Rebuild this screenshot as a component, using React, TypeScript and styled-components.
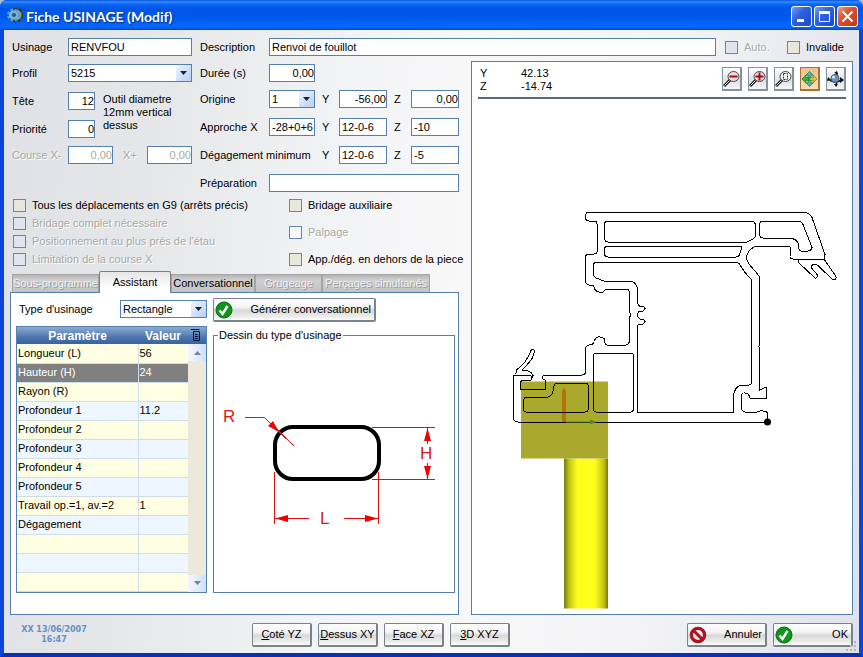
import React, { useState } from "react";
import styled, { createGlobalStyle, css } from "styled-components";

const GlobalStyle = createGlobalStyle`
  * { box-sizing: border-box; }
  body { margin: 0; background: #aeb9d6; }
  body, button, input, select {
    font-family: "Liberation Sans", Arial, sans-serif;
    font-size: 11px;
    line-height: 13px;
    color: #000;
  }
`;

const LINE = "#5480b0";

/* ---------- window frame ---------- */

const Window = styled.div`
  min-height: 100vh;
  display: flex;
  flex-direction: column;
  border: 4px solid #0a45dc;
  border-top: 0;
  border-bottom-color: #0831b8;
  border-radius: 7px 7px 0 0;
  background: #0a45dc;
`;

const TitleBar = styled.header`
  height: 30px;
  margin: 0 -4px;
  padding: 0 5px 0 7px;
  display: flex;
  align-items: center;
  gap: 3px;
  border-radius: 7px 7px 0 0;
  background: linear-gradient(#0a50d8 0, #2f8cff 6%, #0a66f2 14%, #0055e6 30%, #0058ea 55%, #0468ff 85%, #0562f5 93%, #0046c8 100%);
`;

const Title = styled.h1`
  flex: 1;
  margin: 0;
  padding-top: 4px;
  font: bold 14px/18px Lato, "Open Sans", sans-serif;
  color: #fff;
  text-shadow: 1px 1px 1px #0a2a80;
  white-space: nowrap;
`;

const CaptionButton = styled.button<{ $close?: boolean }>`
  width: 21px;
  height: 21px;
  margin: 3px 0 0;
  padding: 0;
  display: grid;
  place-items: center;
  margin-right: ${(p) => (p.$close ? 0 : -1)}px;
  border: 1px solid #fff;
  border-radius: 3px;
  background: ${(p) =>
    p.$close
      ? "linear-gradient(135deg, #f0a088, #e0512c 40%, #c8360f)"
      : "linear-gradient(135deg, #7c9df0, #2f62e0 40%, #1c49c8)"};
`;

const Body = styled.main`
  flex: 1;
  display: flex;
  flex-direction: column;
  padding: 8px 6px 0;
  background: linear-gradient(95deg, #dfe1e5 0%, #e6e7e9 18%, #f2f3f5 38%, #f8f8f9 52%, #f4f4f6 74%, #dfe2ea 100%);
`;

/* ---------- form parts ---------- */

const Label = styled.label<{ $off?: boolean; $inner?: boolean; $span?: number }>`
  line-height: 18px;
  white-space: nowrap;
  padding-left: ${(p) => (p.$inner ? 7 : 0)}px;
  ${(p) => p.$span && css`grid-column: span ${p.$span};`}
  ${(p) => p.$off && css`color: #a9a9a4; text-shadow: 1px 1px 0 #fff;`}
`;

const Field = styled.input<{ $right?: boolean; $span?: number }>`
  width: 100%;
  min-width: 0;
  height: 18px;
  padding: 0 0 0 2px;
  border: 1px solid ${LINE};
  border-radius: 0;
  outline: none;
  background: #fff;
  text-align: ${(p) => (p.$right ? "right" : "left")};
  ${(p) => p.$span && css`grid-column: span ${p.$span};`}
  &:disabled { color: #a9a9a4; }
`;

const SelectBox = styled.span<{ $span?: number }>`
  position: relative;
  display: block;
  height: 18px;
  ${(p) => p.$span && css`grid-column: span ${p.$span};`}
`;

const NativeSelect = styled.select`
  appearance: none;
  width: 100%;
  height: 18px;
  padding: 0 18px 0 2px;
  border: 1px solid ${LINE};
  border-radius: 0;
  outline: none;
  background: #fff;
`;

const SelectArrow = styled.span`
  position: absolute;
  top: 1px;
  right: 1px;
  bottom: 1px;
  width: 15px;
  display: grid;
  place-items: center;
  pointer-events: none;
  background: linear-gradient(135deg, #eef4fd, #b9cef2);
`;

function Select({ id, options, span }: { id: string; options: string[]; span?: number }) {
  return (
    <SelectBox $span={span}>
      <NativeSelect id={id}>
        {options.map((o) => <option key={o}>{o}</option>)}
      </NativeSelect>
      <SelectArrow>
        <svg width="7" height="4"><path d="M0 0h7L3.5 4z" fill="#16233f" /></svg>
      </SelectArrow>
    </SelectBox>
  );
}

const CheckLabel = styled.label<{ $off?: boolean }>`
  height: 18px;
  display: flex;
  align-items: center;
  gap: 6px;
  white-space: nowrap;
  ${(p) => p.$off && css`color: #a9a9a4; text-shadow: 1px 1px 0 #fff;`}
`;

const Box = styled.input<{ $tone: string }>`
  appearance: none;
  width: 13px;
  height: 13px;
  margin: 0;
  border: 1px solid #6288b8;
  background: ${(p) => p.$tone};
  &:checked { box-shadow: inset 0 0 0 3px #fff; background: #21a121; }
`;

function Check({ children, off, tone }: { children: string; off?: boolean; tone?: string }) {
  return (
    <CheckLabel $off={off}>
      <Box type="checkbox" disabled={off} $tone={tone ?? (off ? "#dfe5ee" : "#e9e7dc")} />
      {children}
    </CheckLabel>
  );
}

/* ---------- layout ---------- */

const TopRow = styled.div`
  display: grid;
  grid-template-columns: 56px 124px 77px 1fr 62px 66px;
  padding-left: 2px;
  margin-bottom: 5px;
`;

const DescriptionLabel = styled(Label)`
  padding-left: 8px;
`;

const DescriptionCell = styled.div`
  padding-right: 9px;
`;

const Columns = styled.div`
  flex: 1;
  display: grid;
  grid-template-columns: 449px minmax(0, 1fr);
  gap: 12px;
`;

const LeftColumn = styled.div`
  display: flex;
  flex-direction: column;
  padding-top: 3px;
`;

const Forms = styled.div`
  display: grid;
  grid-template-columns: 180px 259px;
  gap: 8px;
  padding-left: 2px;
`;

const ToolForm = styled.div`
  display: grid;
  grid-template-columns: 56px 27px 18px 34px 45px;
  grid-template-rows: 28px 28px 26px 18px;
  align-items: start;
`;

const ToolNote = styled.p`
  grid-column: 3 / -1;
  grid-row: 2 / span 2;
  margin: 0;
  padding: 1px 20px 0 8px;
`;

const OffsetForm = styled.div`
  display: grid;
  grid-template-columns: 69px 46px 24px 48px 24px 48px;
  grid-template-rows: 26px 28px 28px 28px 18px;
  align-items: start;
`;

const Checks = styled.div`
  display: grid;
  grid-template-columns: 276px 1fr;
  padding: 4px 0 3px 3px;
`;

const CheckColumn = styled.div`
  display: flex;
  flex-direction: column;
  justify-content: space-between;
`;

/* ---------- tabs ---------- */

const TabList = styled.div`
  display: flex;
  align-items: flex-end;
  padding-left: 2px;
`;

const Tab = styled.button<{ $w: number; $active?: boolean }>`
  width: ${(p) => p.$w}px;
  height: 18px;
  padding: 0;
  overflow: hidden;
  white-space: nowrap;
  border: 1px solid #a4a4a4;
  border-width: 1px 1px 0 1px;
  background: linear-gradient(#b4b4b4, #d0d0d0 30%, #c3c3c3);
  &:disabled { color: #f1f1f1; text-shadow: 1px 1px 0 #999; }
  ${(p) => p.$active && css`
    position: relative;
    height: 22px;
    margin-bottom: -1px;
    border-color: #7d7d7d;
    border-radius: 2px 2px 0 0;
    background: linear-gradient(#e6e6e6, #fff 80%);
  `}
`;

const TabPanel = styled.section`
  flex: 1;
  display: grid;
  grid-template-columns: 191px 1fr;
  gap: 6px;
  padding: 5px 3px 21px 5px;
  border: 1px solid ${LINE};
  background: #fff;
`;

const PanelColumn = styled.div`
  display: flex;
  flex-direction: column;
`;

const TypeRow = styled.div`
  display: grid;
  grid-template-columns: 101px 87px;
  height: 25px;
  margin-bottom: 3px;
  padding: 2px 0 0 3px;
`;

const PushButton = styled.button<{ $w: number; $icon?: boolean }>`
  width: ${(p) => p.$w}px;
  height: 24px;
  display: flex;
  align-items: center;
  justify-content: ${(p) => (p.$icon ? "space-between" : "center")};
  padding: 0 ${(p) => (p.$icon ? 3 : 0)}px 0 ${(p) => (p.$icon ? 1 : 0)}px;
  white-space: nowrap;
  border: 1px solid #78838c;
  border-right-width: 2px;
  border-bottom-width: 2px;
  border-radius: 2px;
  background: linear-gradient(#fff, #f5f5f5 38%, #d9d9d9 55%, #ededed 85%, #fdfdfd);
`;

/* ---------- parameter table ---------- */

const TableFrame = styled.div`
  display: flex;
  border: 1px solid ${LINE};
`;

const headFill = "linear-gradient(#8cabd3, #4e76ad 60%, #38629c)";

const ParamTable = styled.table`
  flex: 1;
  border-collapse: collapse;
  table-layout: fixed;
  th {
    height: 17px;
    padding: 0;
    background: ${headFill};
    color: #fff;
    font-size: 12px;
    line-height: 16px;
  }
  th:first-child { width: 121px; }
`;

const ParamRow = styled.tr<{ $selected?: boolean }>`
  height: 19px;
  background: #ffffe4;
  &:nth-child(even) { background: #eef6ff; }
  td {
    padding: 0 1px;
    border-bottom: 1px solid #cfdde8;
    white-space: nowrap;
  }
  td + td { border-left: 1px solid #cfdde8; }
  ${(p) => p.$selected && css`
    &, &:nth-child(even) { background: #808080; color: #fff; }
  `}
`;

const ScrollSide = styled.div`
  width: 18px;
  display: flex;
  flex-direction: column;
  background: #ece9dc;
`;

const HeadMenu = styled.button`
  height: 17px;
  padding: 0;
  border: 0;
  text-align: left;
  background: ${headFill};
`;

const ScrollButton = styled.button`
  height: 17px;
  padding: 0;
  display: grid;
  place-items: center;
  border: 0;
  background: linear-gradient(90deg, #f3f8ff, #cfdff8);
`;

const Track = styled.div`
  flex: 1;
`;

const DrawingBox = styled.fieldset`
  flex: 1;
  min-width: 0;
  margin: 7px 0 0;
  padding: 0;
  border: 1px solid ${LINE};
  legend { margin-left: 4px; padding: 0 1px; }
  svg { display: block; width: 100%; height: auto; }
`;

/* ---------- viewer ---------- */

const Viewer = styled.section`
  display: flex;
  flex-direction: column;
  border: 1px solid ${LINE};
  background: #fff;
  padding: 0 6px 0;
`;

const ViewerHead = styled.div`
  display: flex;
  justify-content: space-between;
  height: 37px;
  padding: 5px 0 0 2px;
  border-bottom: 2px solid #5a6878;
`;

const Readout = styled.dl`
  display: grid;
  grid-template-columns: 41px 60px;
  align-content: start;
  margin: 0;
  dd { margin: 0; }
`;

const ViewTools = styled.div`
  display: flex;
  gap: 6px;
`;

const ViewButton = styled.button<{ $on?: boolean }>`
  width: 20px;
  height: 24px;
  padding: 0;
  display: grid;
  place-items: center;
  border: 1px solid ${(p) => (p.$on ? "#a8703c" : "#8493a0")};
  border-right-width: 2px;
  border-bottom-width: 2px;
  background: ${(p) =>
    p.$on ? "linear-gradient(#f3c18c, #ffdfb0)" : "linear-gradient(#fff, #dde1e6 60%, #f5f6f7)"};
`;

const ProfileSvg = styled.svg`
  flex: 1;
  display: block;
  width: calc(100% + 12px);
  min-height: 0;
  margin: 0 -6px;
`;

/* ---------- footer ---------- */

const Footer = styled.footer`
  position: relative;
  display: flex;
  align-items: center;
  gap: 6px;
  padding: 8px 0 6px;
`;

const Stamp = styled.p`
  width: 88px;
  margin: 0 148px 0 0;
  text-align: center;
  font: bold 8px/10px "DejaVu Sans", sans-serif;
  color: #6590c4;
  white-space: nowrap;
`;

const Spacer = styled.div`
  flex: 1;
`;

const Grip = styled.svg`
  position: absolute;
  right: -5px;
  bottom: 0;
`;

/* ---------- icons ---------- */

const OkIcon = () => (
  <svg width="18" height="18" viewBox="0 0 18 18">
    <circle cx="9" cy="9" r="8" fill="#12931b" stroke="#0a7012" />
    <path d="M4.5 9.5l3 3.5 5-8" fill="none" stroke="#fff" strokeWidth="2.5" />
  </svg>
);

const CancelIcon = () => (
  <svg width="18" height="18" viewBox="0 0 18 18" fill="none">
    <circle cx="9" cy="9" r="6.5" stroke="#b01020" strokeWidth="3" />
    <path d="M4.5 4.5l9 9" stroke="#b01020" strokeWidth="3" />
    <circle cx="9" cy="9" r="8" stroke="#7c0a14" strokeWidth="0.5" />
  </svg>
);

const Magnifier = ({ mark }: { mark: "minus" | "plus" | "page" }) => (
  <svg width="17" height="20" viewBox="0 0 17 20" fill="none">
    <path d="M1 17l6-6" stroke="#222" strokeWidth="3" />
    <path d="M1.5 16.500l5-5" stroke="#ddd" />
    <ellipse cx="10.500" cy="7.500" rx="5.500" ry="5" fill={mark === "page" ? "#f2f2f2" : "#f6d6da"} stroke="#444" />
    {mark !== "page" && <path d="M6.500 7.500h8" stroke="#a00c14" strokeWidth="2" />}
    {mark === "plus" && <path d="M10.500 3.500v8" stroke="#a00c14" strokeWidth="2" />}
    {mark === "page" && <path d="M8.500 4.500h4v6h-4z" stroke="#333" strokeDasharray="2 1" />}
  </svg>
);

const PanIcon = () => (
  <svg width="17" height="18" viewBox="0 0 18 18" strokeWidth="0.7">
    <path d="M9 1l4 4h-2.500v3h-3V5H5z" fill="#3cc0a8" stroke="#14705c" />
    <path d="M9 17l4-4h-2.500v-3h-3v3H5z" fill="#3cc0a8" stroke="#14705c" />
    <path d="M1 9l4-4v2.500h3.500v3H5V13z" fill="#37b43c" stroke="#176a1b" />
    <path d="M17 9l-4-4v2.500H9.500v3H13V13z" fill="#d8c63c" stroke="#80701a" />
  </svg>
);

const OrbitIcon = () => (
  <svg width="17" height="18" viewBox="0 0 17 18" fill="none">
    <path d="M9 2q3 5 0 13M1 9q6 5 14 1" stroke="#111" strokeWidth="1.5" />
    <circle cx="8" cy="8.500" r="4" fill="#6c94b8" stroke="#35546f" />
    <circle cx="6.500" cy="7" r="1.500" fill="#d4e7f5" />
    <path d="M7 3l3-2 1 3zM0 11l1-4 3 3zM13 7l4 3-4 3zM7 14l4 0-2 3z" fill="#111" />
  </svg>
);

const GearIcon = () => (
  <svg width="16" height="18" viewBox="0 0 16 18">
    <circle cx="9.500" cy="9" r="6" fill="none" stroke="#3b3720" strokeWidth="3" strokeDasharray="3 2" />
    <circle cx="9.500" cy="9" r="5" fill="#a7a268" />
    <circle cx="6.500" cy="9" r="5" fill="none" stroke="#4c9fd0" strokeWidth="3" strokeDasharray="2.5 1.5" />
    <circle cx="6.500" cy="9" r="4.500" fill="#6db6e0" />
    <circle cx="7" cy="9" r="2" fill="#24577f" />
  </svg>
);

const RectangleDrawing = () => (
  <svg viewBox="0 -1 240 246" fill="none" stroke="#e01010" role="img" aria-label="Rectangle R, L, H">
    <rect x="61" y="84" width="104" height="52" rx="18" stroke="#000" strokeWidth="4" />
    <g shapeRendering="crispEdges">
      <path d="M30.500 74.500h20l30 29M158 84.500h63M158 136.500h63M213.500 85v16M213.500 120v16" />
      <path d="M60.500 129v52M164.500 129v52M61 175.500h34M130 175.500h34" />
    </g>
    <g fill="#f00000" stroke="none">
      <path d="M65 89l-11-6 5-5z" />
      <path d="M213.500 85l-3.500 13h7zM213.500 136l-3.500-13h7z" />
      <path d="M61 175.500l13-3.500v7zM164 175.500l-13-3.500v7z" />
    </g>
    <g fill="#d81818" stroke="none" fontSize="17" fontFamily="Liberation Sans">
      <text x="9" y="79">R</text>
      <text x="206" y="116">H</text>
      <text x="106" y="181">L</text>
    </g>
  </svg>
);

const ProfileDrawing = () => (
  <ProfileSvg viewBox="472 99 380 514" preserveAspectRatio="xMidYMid meet" role="img" aria-label="Profil 5215">
    <defs>
      <linearGradient id="shaft">
        <stop offset="0" stopColor="#77770c" />
        <stop offset="0.12" stopColor="#c4c414" />
        <stop offset="0.3" stopColor="#ffff1e" />
        <stop offset="0.7" stopColor="#ffff1e" />
        <stop offset="0.9" stopColor="#c4c414" />
        <stop offset="1" stopColor="#77770c" />
      </linearGradient>
    </defs>
    <rect x="564" y="458" width="44" height="150" fill="url(#shaft)" />
    <rect x="521" y="381" width="87" height="77" fill="#aaa92d" />
    <path d="M562 422V391l2-4 2 4v31z" fill="#b07408" />
    <g fill="none" stroke="#000" shapeRendering="crispEdges">
      <path d="M803 211.500H589Q585.500 212 585.500 215V217Q585.500 220.500 589 220.500H594Q597 221 597 223V251Q597 253.500 594 253.500H589Q585.500 254 585.500 257V281Q586 284 589 284.500L593 285Q594.500 287 595 289Q598 293 603 291.500Q605 288.500 608 288.500H626Q629.500 289 629.500 292V312L631 314.500 629.500 317V341Q629 344 626 344.500H607Q604 343 604 338Q602 336 598 336.500Q595 337 594.500 341Q593 344.500 589 344.500Q586 345 585.500 348V372Q585 374.500 582 374.500H546Q542 375 542.500 378L545.500 380V388.500H520.500V382Q521 379.500 524 379.500H531Q533 377 530 374.500H513.500V418Q514 421.500 518 421.500H767" />
      <path d="M515.500 374L517 369Q526 363 531 350Q534 347 534.500 351L532 358Q526 366 522 369.500Q529 370 531 372L533 375 531 379" />
      <path d="M803 211.500Q809 212 812 217L825 254 824 258.500H793Q790 258 790 256L790.500 250Q791 246 788 245.500H758Q748 247 746.500 257Q747 262 752 267L759.500 276V345L758.500 346 759.500 347.500V390L763 388Q765 387 766.500 387.500V397.500H750Q749 392.500 745 392.500Q742 392 741.500 395V408Q742 411 745 411.500H757Q759 410 763 410.500Q767 410.500 767.500 413V421" />
      <path d="M798.500 259V262L815 277.500Q818 278 817 274L812 268Q811 264 814 263.500Q818 264 820 267L833 279.500Q837 279 836 276L824 258.500" />
      <path d="M608 220.500H752Q755 221 755.500 224V236Q754 239 750 240L747 241.500H608Q604.500 241 604.500 238V224Q604.500 220.500 608 220.500Z" />
      <path d="M763 220.500H797Q802 221 803 224L812 247Q811 250.500 808 250.500H801Q798.500 250 798.500 244Q797 238 789 237.500H763Q759.500 237 759.500 234V224Q760 220.500 763 220.500Z" />
      <path d="M608 245.500H742L740 253Q739 256.500 736 256.500H608Q604.500 256 604.500 253V249Q604.500 245.500 608 245.500Z" />
      <path d="M597 261.500H737Q740 263 741 266Q745 273 751.500 279V383Q751 384.500 749 384.500H742Q734 386 733.500 396V411.500H637.500V325L639.500 323.500H643L645 321 643 318.500H640L637.500 316V313L639.500 310.500H643L645 308 643 305.500H639.500L637.500 303V289Q637 281 629 280.500H604L596 277.500Q593.500 276 593.500 274V264Q594 261.500 597 261.500Z" />
      <path d="M596 352.500H631Q633.500 353 633.500 355V409Q633 411.500 631 411.500H596Q593.500 411 593.500 409V355Q594 352.500 596 352.500Z" />
      <path d="M556 382.500H585Q588.500 383 588.500 386V408Q588 411.500 585 411.500H526Q523.500 411 523.500 409V400Q524 396.500 527 396.500H548Q553 395 553.500 388Q554 383 556 382.500Z" />
    </g>
    <path d="M566 421h24v-2l7 2.500-7 2.500v-2h-24z" fill="#5c8a18" />
    <circle cx="767.500" cy="421.500" r="3.500" />
  </ProfileSvg>
);

/* ---------- data ---------- */

const params: [string, string][] = [
  ["Longueur (L)", "56"],
  ["Hauteur (H)", "24"],
  ["Rayon (R)", ""],
  ["Profondeur 1", "11.2"],
  ["Profondeur 2", ""],
  ["Profondeur 3", ""],
  ["Profondeur 4", ""],
  ["Profondeur 5", ""],
  ["Travail op.=1, av.=2", "1"],
  ["Dégagement", ""],
  ["", ""],
  ["", ""],
  ["", ""],
];

export default function App() {
  const [selected, setSelected] = useState(1);
  return (
    <>
      <GlobalStyle />
      <Window>
        <TitleBar>
          <GearIcon />
          <Title>Fiche USINAGE (Modif)</Title>
          <CaptionButton aria-label="Réduire">
            <svg width="13" height="13"><path d="M2 9h7v3H2z" fill="#fff" /></svg>
          </CaptionButton>
          <CaptionButton aria-label="Agrandir">
            <svg width="13" height="13" fill="none" stroke="#fff"><path d="M1.5 2v9.500h10V2" /><path d="M1 2.500h11" strokeWidth="3" /></svg>
          </CaptionButton>
          <CaptionButton $close aria-label="Fermer">
            <svg width="13" height="13" stroke="#fff" strokeWidth="2"><path d="M1.5 1.500l10 10M11.500 1.500l-10 10" /></svg>
          </CaptionButton>
        </TitleBar>

        <Body>
          <TopRow>
            <Label htmlFor="usinage">Usinage</Label>
            <Field id="usinage" defaultValue="RENVFOU" />
            <DescriptionLabel htmlFor="description">Description</DescriptionLabel>
            <DescriptionCell>
              <Field id="description" defaultValue="Renvoi de fouillot" />
            </DescriptionCell>
            <Check off>Auto.</Check>
            <Check>Invalide</Check>
          </TopRow>

          <Columns>
            <LeftColumn>
              <Forms>
                <ToolForm>
                  <Label htmlFor="profil">Profil</Label>
                  <Select id="profil" options={["5215"]} span={4} />
                  <Label htmlFor="tete">Tête</Label>
                  <Field id="tete" $right defaultValue="12" />
                  <ToolNote>Outil diametre 12mm vertical dessus</ToolNote>
                  <Label htmlFor="priorite">Priorité</Label>
                  <Field id="priorite" $right defaultValue="0" />
                  <Label htmlFor="xmoins" $off>Course X-</Label>
                  <Field id="xmoins" $right $span={2} disabled defaultValue="0,00" />
                  <Label htmlFor="xplus" $off $inner>&nbsp;X+</Label>
                  <Field id="xplus" $right disabled defaultValue="0,00" />
                </ToolForm>
                <OffsetForm>
                  <Label htmlFor="duree">Durée (s)</Label>
                  <Field id="duree" $right defaultValue="0,00" />
                  <Label as="span" $span={4} />
                  <Label htmlFor="origine">Origine</Label>
                  <Select id="origine" options={["1"]} />
                  <Label htmlFor="oy" $inner>Y</Label>
                  <Field id="oy" $right defaultValue="-56,00" />
                  <Label htmlFor="oz" $inner>Z</Label>
                  <Field id="oz" $right defaultValue="0,00" />
                  <Label htmlFor="ax">Approche X</Label>
                  <Field id="ax" defaultValue="-28+0+6" />
                  <Label htmlFor="ay" $inner>Y</Label>
                  <Field id="ay" defaultValue="12-0-6" />
                  <Label htmlFor="az" $inner>Z</Label>
                  <Field id="az" defaultValue="-10" />
                  <Label as="span" $span={2}>Dégagement minimum</Label>
                  <Label htmlFor="dy" $inner>Y</Label>
                  <Field id="dy" defaultValue="12-0-6" />
                  <Label htmlFor="dz" $inner>Z</Label>
                  <Field id="dz" defaultValue="-5" />
                  <Label htmlFor="preparation">Préparation</Label>
                  <Field id="preparation" $span={5} />
                </OffsetForm>
              </Forms>

              <Checks>
                <CheckColumn>
                  <Check>Tous les déplacements en G9 (arrêts précis)</Check>
                  <Check off>Bridage complet nécessaire</Check>
                  <Check off>Positionnement au plus prés de l'étau</Check>
                  <Check off>Limitation de la course X</Check>
                </CheckColumn>
                <CheckColumn>
                  <Check>Bridage auxiliaire</Check>
                  <Check off tone="#f6f9fc">Palpage</Check>
                  <Check>App./dég. en dehors de la piece</Check>
                </CheckColumn>
              </Checks>

              <TabList role="tablist">
                <Tab role="tab" $w={87} disabled>Sous-programme</Tab>
                <Tab role="tab" $w={72} $active aria-selected>Assistant</Tab>
                <Tab role="tab" $w={84}>Conversationnel</Tab>
                <Tab role="tab" $w={67} disabled>Grugeage</Tab>
                <Tab role="tab" $w={108} disabled>Perçages simultanés</Tab>
              </TabList>

              <TabPanel role="tabpanel">
                <PanelColumn>
                  <TypeRow>
                    <Label htmlFor="type">Type d'usinage</Label>
                    <Select id="type" options={["Rectangle"]} />
                  </TypeRow>
                  <TableFrame>
                    <ParamTable>
                      <thead>
                        <tr><th>Paramètre</th><th>Valeur</th></tr>
                      </thead>
                      <tbody>
                        {params.map(([name, value], i) => (
                          <ParamRow key={i} $selected={i === selected} onClick={() => setSelected(i)}>
                            <td>{name}</td>
                            <td>{value}</td>
                          </ParamRow>
                        ))}
                      </tbody>
                    </ParamTable>
                    <ScrollSide>
                      <HeadMenu aria-label="Options du tableau">
                        <svg width="14" height="15" fill="none" stroke="#0b1638">
                          <path d="M3 2.500h8.500M5.500 4.500h6v9h-6zM7 7.500h3M7 9.500h3M7 11.500h3" />
                        </svg>
                      </HeadMenu>
                      <ScrollButton aria-label="Monter">
                        <svg width="7" height="4"><path d="M0 4h7L3.5 0z" fill="#7c828c" /></svg>
                      </ScrollButton>
                      <Track />
                      <ScrollButton aria-label="Descendre">
                        <svg width="7" height="4"><path d="M0 0h7L3.5 4z" fill="#7c828c" /></svg>
                      </ScrollButton>
                    </ScrollSide>
                  </TableFrame>
                </PanelColumn>
                <PanelColumn>
                  <PushButton $w={163} $icon><OkIcon />Générer conversationnel</PushButton>
                  <DrawingBox>
                    <legend>Dessin du type d'usinage</legend>
                    <RectangleDrawing />
                  </DrawingBox>
                </PanelColumn>
              </TabPanel>
            </LeftColumn>

            <Viewer>
              <ViewerHead>
                <Readout>
                  <dt>Y</dt><dd>42.13</dd>
                  <dt>Z</dt><dd>-14.74</dd>
                </Readout>
                <ViewTools>
                  <ViewButton aria-label="Zoom arrière"><Magnifier mark="minus" /></ViewButton>
                  <ViewButton aria-label="Zoom avant"><Magnifier mark="plus" /></ViewButton>
                  <ViewButton aria-label="Zoom page"><Magnifier mark="page" /></ViewButton>
                  <ViewButton aria-label="Déplacer" $on><PanIcon /></ViewButton>
                  <ViewButton aria-label="Tourner"><OrbitIcon /></ViewButton>
                </ViewTools>
              </ViewerHead>
              <ProfileDrawing />
            </Viewer>
          </Columns>

          <Footer>
            <Stamp>XX 13/06/2007<br />16:47</Stamp>
            <PushButton $w={60}><span><u>C</u>oté YZ</span></PushButton>
            <PushButton $w={60}><span><u>D</u>essus XY</span></PushButton>
            <PushButton $w={60}><span><u>F</u>ace XZ</span></PushButton>
            <PushButton $w={60}><span><u>3</u>D XYZ</span></PushButton>
            <Spacer />
            <PushButton $w={80} $icon><CancelIcon />Annuler</PushButton>
            <PushButton $w={80} $icon><OkIcon />OK</PushButton>
            <Grip width="13" height="13" fill="#b5b6ae">
              <path d="M9 1h2v2H9zM9 5h2v2H9zM5 5h2v2H5zM9 9h2v2H9zM5 9h2v2H5zM1 9h2v2H1z" />
            </Grip>
          </Footer>
        </Body>
      </Window>
    </>
  );
}
